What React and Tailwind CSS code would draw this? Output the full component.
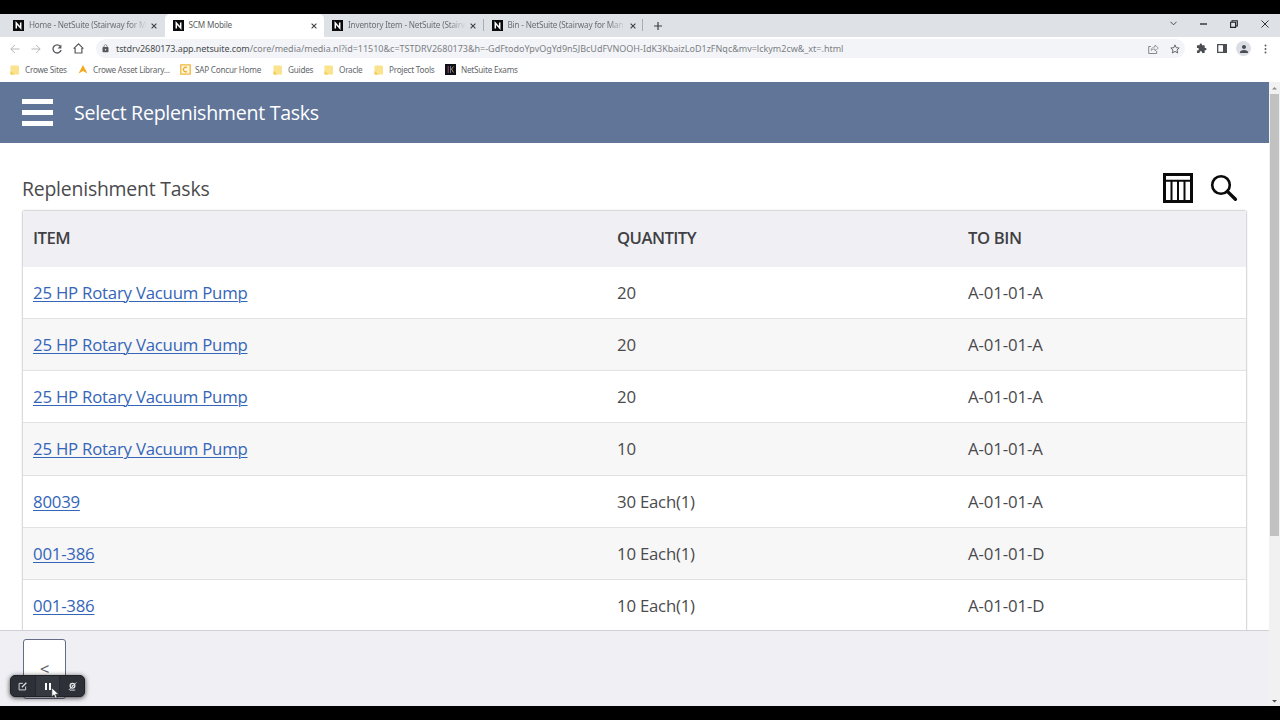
import { MdExtension, MdPerson, MdLock } from "react-icons/md";

const tabs = [
  { title: "Home - NetSuite (Stairway for M", active: false },
  { title: "SCM Mobile", active: true },
  { title: "Inventory Item - NetSuite (Stairw", active: false },
  { title: "Bin - NetSuite (Stairway for Man", active: false },
];

const tasks = [
  { item: "25 HP Rotary Vacuum Pump", quantity: "20", bin: "A-01-01-A" },
  { item: "25 HP Rotary Vacuum Pump", quantity: "20", bin: "A-01-01-A" },
  { item: "25 HP Rotary Vacuum Pump", quantity: "20", bin: "A-01-01-A" },
  { item: "25 HP Rotary Vacuum Pump", quantity: "10", bin: "A-01-01-A" },
  { item: "80039", quantity: "30 Each(1)", bin: "A-01-01-A" },
  { item: "001-386", quantity: "10 Each(1)", bin: "A-01-01-D" },
  { item: "001-386", quantity: "10 Each(1)", bin: "A-01-01-D" },
];

function NetSuiteIcon() {
  return (
    <svg viewBox="0 0 11 11" className="size-[11px] shrink-0">
      <rect width="11" height="11" fill="#0b0b0d" />
      <path d="M3.3 8.4V3l4.4 5V2.6" fill="none" stroke="#fff" strokeWidth="1.5" />
    </svg>
  );
}

function CloseIcon() {
  return (
    <svg viewBox="0 0 6 6" className="size-[6px] shrink-0">
      <path d="M.6.6l4.8 4.8M5.4.6L.6 5.4" stroke="#3c4043" strokeWidth="1.1" />
    </svg>
  );
}

function FolderIcon() {
  return (
    <svg viewBox="0 0 9 10" className="w-[9px] h-[10px] shrink-0">
      <path d="M.5.5h7L9 1.6V9.5H.5z" fill="#fbe28c" />
      <path d="M.5 6v3.5h4z" fill="#f3cb55" />
    </svg>
  );
}

function Bookmark({ className, icon, label }) {
  return (
    <div className={`flex items-center shrink-0 ${className}`}>
      <span className="w-[15px] flex shrink-0">{icon}</span>
      <span>{label}</span>
    </div>
  );
}

function TabStrip() {
  return (
    <div className="h-[23px] bg-[#dee1e6] flex items-end pl-[5px]">
      {tabs.map((tab, i) => (
        <div
          key={i}
          className={`relative w-[159.5px] shrink-0 h-[23px] flex items-center pl-2 ${
            tab.active ? "bg-white rounded-t-[5px]" : ""
          }`}
        >
          <NetSuiteIcon />
          <span
            className={`ml-[5px] w-[118px] mr-[4px] shrink-0 whitespace-nowrap text-[8.2px] tracking-[-0.2px] ${
              tab.active
                ? "text-[#5a5e62]"
                : "text-[#6c7074] [mask-image:linear-gradient(to_right,black_85%,transparent_100%)]"
            }`}
          >
            {tab.title}
          </span>
          <CloseIcon />
          {i > 1 && <span className="absolute right-0 top-[5px] h-3 w-px bg-[#a9acb1]" />}
        </div>
      ))}
      <div className="w-[30px] h-[23px] flex items-center justify-center">
        <svg viewBox="0 0 8 8" className="size-2">
          <path d="M4 0v8M0 4h8" stroke="#3c4043" strokeWidth="1.2" />
        </svg>
      </div>
      <div className="ml-auto h-[19px] self-start flex items-center">
        <svg viewBox="0 0 8 5" className="w-[7px] h-[5px] mr-[23px]">
          <path d="M.5.5L4 4 7.5.5" fill="none" stroke="#333" />
        </svg>
        <svg viewBox="0 0 7 2" className="w-[7px] h-[2px] mr-[23px]">
          <path d="M0 1h7" stroke="#111" strokeWidth="1.2" />
        </svg>
        <svg viewBox="0 0 8 8" className="size-[8px] mr-[23px]">
          <path d="M.6 2.2h5v5.2h-5zM2 2V.7h5.3V6H6" fill="none" stroke="#222" strokeWidth="1.1" />
        </svg>
        <svg viewBox="0 0 8 8" className="size-2 mr-[11px]">
          <path d="M.5.5l7 7M7.5.5l-7 7" stroke="#222" strokeWidth=".9" />
        </svg>
      </div>
    </div>
  );
}

function Toolbar() {
  return (
    <div className="h-[23px] bg-white flex items-center pl-[10px]">
      <svg viewBox="0 0 10 10" className="size-[10px] mr-[11px]">
        <path d="M9.5 5H1M4.8 1L.8 5l4 4" fill="none" stroke="#b4b6b9" />
      </svg>
      <svg viewBox="0 0 10 10" className="size-[10px] mr-[11px]">
        <path d="M.5 5H9M5.2 1l4 4-4 4" fill="none" stroke="#b4b6b9" />
      </svg>
      <svg viewBox="0 0 10 10" className="size-[10px] mr-[11px]">
        <path d="M8.4 2.4A4.1 4.1 0 1 0 9.1 6" fill="none" stroke="#55585c" strokeWidth="1.3" />
        <path d="M9.4.4v4H5.6z" fill="#55585c" />
      </svg>
      <svg viewBox="0 0 11 11" className="size-[11px]">
        <path d="M.6 5.6L5.5.9l4.9 4.7M2.1 4.9V10h6.8V4.9" fill="none" stroke="#55585c" strokeWidth="1.2" />
      </svg>
      <div className="ml-[12px] w-[1089px] h-[19px] rounded-full bg-[#f3f4f7] flex items-center pl-[5px] pr-[5px]">
        <MdLock className="size-[9px] text-[#55585c] shrink-0" />
        <span className="ml-[6px] text-[9px] tracking-[-0.01px] whitespace-nowrap text-[#7c8085]">
          <span className="text-[#4a4d51] tracking-[-0.1px]">tstdrv2680173.app.netsuite.com</span>
          /core/media/media.nl?id=11510&c=TSTDRV2680173&h=-GdFtodoYpvOgYd9n5JBcUdFVNOOH-IdK3KbaizLoD1zFNqc&mv=lckym2cw&_xt=.html
        </span>
        <svg viewBox="0 0 11 10" className="w-[11px] h-[10px] ml-auto shrink-0">
          <path d="M3 2.5H.7v7h8V7" fill="none" stroke="#85888d" />
          <path d="M3 6.5c.4-2.4 1.8-3.5 4-3.5V1l3.3 3L7 7V5C5.3 5 4 5.4 3 6.5z" fill="none" stroke="#85888d" strokeWidth=".8" />
        </svg>
        <svg viewBox="0 0 10 10" className="size-[10px] ml-[11px] shrink-0">
          <path d="M5 .9l1.2 2.8 3 .3L7 6l.7 3L5 7.4 2.3 9 3 6 .8 4l3-.3z" fill="none" stroke="#55585c" strokeWidth=".9" />
        </svg>
      </div>
      <div className="flex items-center ml-auto pr-[13px]">
        <MdExtension className="size-[11px] text-[#4a4d51] mr-[10px]" />
        <svg viewBox="0 0 10 9" className="w-[10px] h-[9px] mr-[9px]">
          <path d="M.7.7h8.6v7.6H.7z" fill="none" stroke="#4a4d51" strokeWidth="1.3" />
          <path d="M6 .5h3.5v8H6z" fill="#4a4d51" />
        </svg>
        <span className="size-[15px] rounded-full bg-[#dcdee6] flex items-center justify-center mr-[13px]">
          <MdPerson className="size-[12px] text-[#4a4d51]" />
        </span>
        <svg viewBox="0 0 3 10" className="w-[3px] h-[10px]">
          <circle cx="1.5" cy="1.5" r=".95" fill="#55585c" />
          <circle cx="1.5" cy="5" r=".95" fill="#55585c" />
          <circle cx="1.5" cy="8.5" r=".95" fill="#55585c" />
        </svg>
      </div>
    </div>
  );
}

function BookmarksBar() {
  return (
    <div className="h-[22px] bg-white flex items-center pb-[2px] text-[8.2px] tracking-[-0.25px] whitespace-nowrap text-[#64676b] pl-[10px]">
      <Bookmark className="w-[68px]" icon={<FolderIcon />} label="Crowe Sites" />
      <Bookmark
        className="w-[102px]"
        icon={
          <svg viewBox="0 0 10 9" className="w-[10px] h-[9px]">
            <path d="M5 0l4.5 8.5L5 6 .5 8.5z" fill="#f5a81c" />
          </svg>
        }
        label="Crowe Asset Library..."
      />
      <Bookmark
        className="w-[93px]"
        icon={
          <svg viewBox="0 0 11 11" className="size-[11px]">
            <path d="M.8.8h9.4v9.4H.8z" fill="#fff6dc" stroke="#eeb83f" strokeWidth="1.3" />
            <path d="M7 3.6a2.3 2.3 0 1 0 0 3.8" fill="none" stroke="#e9a92a" strokeWidth="1.2" />
          </svg>
        }
        label="SAP Concur Home"
      />
      <Bookmark className="w-[51px]" icon={<FolderIcon />} label="Guides" />
      <Bookmark className="w-[50px]" icon={<FolderIcon />} label="Oracle" />
      <Bookmark className="w-[71px]" icon={<FolderIcon />} label="Project Tools" />
      <Bookmark
        className="gap-px"
        icon={
          <svg viewBox="0 0 11 11" className="size-[11px]">
            <rect width="11" height="11" fill="#101018" />
            <path d="M3.2 2v7" stroke="#a8485c" />
            <path d="M5.5 2v7" stroke="#6274b4" />
            <path d="M8.5 2.5L6.5 5l2 3.5" fill="none" stroke="#a99a4a" />
          </svg>
        }
        label="NetSuite Exams"
      />
    </div>
  );
}

function TaskTable() {
  return (
    <div className="border border-b-0 border-[#d9d9de] rounded-t-[3px] shadow-[0_0_2px_rgba(0,0,0,0.12)] text-[16.8px] tracking-[-0.22px] text-[#4a4a4d]">
      <div className="h-[56px] bg-[#f0f0f4] flex items-center pl-[10px] pb-[3px] text-[16.7px] font-semibold tracking-[-0.55px] text-[#404044]">
        <span className="w-[584px]">ITEM</span>
        <span className="w-[351px]">QUANTITY</span>
        <span className="tracking-[-0.4px]">TO BIN</span>
      </div>
      {tasks.map((task, i) => (
        <div
          key={i}
          className="h-[52.15px] flex items-center pl-[10px] border-b border-[#e2e2e5] odd:bg-[#f7f7f7] even:bg-white"
        >
          <span className="w-[584px]">
            <a href="#" className="text-[#3465b8] underline underline-offset-[1.5px] decoration-1">
              {task.item}
            </a>
          </span>
          <span className="w-[351px]">{task.quantity}</span>
          <span className="tracking-[-0.12px]">{task.bin}</span>
        </div>
      ))}
    </div>
  );
}

// Floating controls of the screen recorder with the mouse pointer over them
function RecorderControls() {
  return (
    <div className="absolute left-[10px] top-[44px] w-[75px] h-[22px] rounded-[5px] bg-[#2d3036] border border-[#202227] shadow-[0_1px_5px_rgba(0,0,0,0.75)] flex items-center">
      <div className="flex-1 flex justify-center">
        <svg viewBox="0 0 10 10" className="size-[9px]">
          <path d="M5.5 1.5H1.2v7.3h7.3V5" fill="none" stroke="#e4e5e7" />
          <path d="M4.3 5.8L9.3.8" stroke="#e4e5e7" strokeWidth="1.3" />
        </svg>
      </div>
      <div className="flex-1 h-full bg-[#353940] border-x border-[#25282d] flex items-center justify-center gap-[2px]">
        <span className="w-[2px] h-[7px] bg-white" />
        <span className="w-[2px] h-[7px] bg-white" />
      </div>
      <div className="flex-1 flex justify-center">
        <svg viewBox="0 0 10 10" className="size-[9px]">
          <circle cx="5" cy="4.2" r="2.6" fill="none" stroke="#e4e5e7" strokeWidth="1.5" />
          <circle cx="5" cy="4.2" r="1" fill="#e4e5e7" />
          <path d="M2 9h6M1 8.8L9.3.5" stroke="#e4e5e7" />
        </svg>
      </div>
      <svg viewBox="0 0 9 13" className="absolute left-[40px] top-[11px] w-[9px] h-[13px]">
        <path d="M.8.8v9l2.2-2 1.5 3.7 1.6-.7-1.5-3.5h3z" fill="#fff" stroke="#222" strokeWidth=".6" />
      </svg>
    </div>
  );
}

export default function App() {
  return (
    <div className="w-[1280px] h-[720px] bg-black py-[14px] overflow-hidden font-['Open_Sans',sans-serif]">
      <div className="h-[692px] flex flex-col bg-white">
        <div className="shrink-0 font-['Noto_Sans',sans-serif]">
          <TabStrip />
          <Toolbar />
          <BookmarksBar />
        </div>

        <div className="flex flex-1 min-h-0">
          <div className="w-[1269px] flex flex-col">
            <header className="h-[61px] shrink-0 bg-[#617599] flex items-center pl-[22px] text-white">
              <div className="flex flex-col gap-[6px]">
                <span className="w-[31px] h-[5px] bg-white" />
                <span className="w-[31px] h-[5px] bg-white" />
                <span className="w-[31px] h-[5px] bg-white" />
              </div>
              <h1 className="ml-[21px] text-[19.6px] tracking-[-0.29px]">Select Replenishment Tasks</h1>
            </header>

            <main className="flex-1 min-h-0 overflow-hidden pl-[22px] pr-[22px]">
              <div className="h-[67px] pt-[23px] flex items-center">
                <h2 className="pt-[2px] text-[19.4px] tracking-[-0.2px] text-[#4a4a4d]">Replenishment Tasks</h2>
                <svg viewBox="0 0 30 30" className="size-[30px] ml-auto">
                  <path d="M1.5 1.5h27v27h-27z" fill="none" stroke="#0a0a0a" strokeWidth="3" />
                  <path d="M1 7.7h28M8.5 8v20M15 8v20M21.5 8v20" stroke="#0a0a0a" strokeWidth="2" />
                </svg>
                <svg viewBox="0 0 28 28" className="size-[28px] ml-[17px] mr-[9px]">
                  <circle cx="11" cy="11" r="8.8" fill="none" stroke="#0a0a0a" strokeWidth="2.6" />
                  <path d="M17.4 17.4l8 7.8" stroke="#0a0a0a" strokeWidth="3.4" strokeLinecap="round" />
                </svg>
              </div>
              <TaskTable />
            </main>

            <footer className="relative h-[76px] shrink-0 bg-[#f0f0f4] border-t border-[#cfcfd4] pl-[23px] pt-[8px]">
              <button className="w-[43px] h-[60px] rounded-[3px] bg-white border border-[#646c8a] text-[17px] text-[#55585f]">
                &lt;
              </button>
              <RecorderControls />
            </footer>
          </div>

          <div className="w-[11px] bg-[#f1f1f1] flex flex-col items-center">
            <svg viewBox="0 0 11 12" className="w-[11px] h-3 shrink-0">
              <path d="M3 7.5L5.5 5 8 7.5z" fill="#8a8a8a" />
            </svg>
            <div className="w-[9px] h-[442px] bg-[#c1c1c1]" />
            <svg viewBox="0 0 11 12" className="w-[11px] h-3 mt-auto shrink-0">
              <path d="M3 6l2.5 2.5L8 6z" fill="#505050" />
            </svg>
          </div>
        </div>
      </div>
    </div>
  );
}
